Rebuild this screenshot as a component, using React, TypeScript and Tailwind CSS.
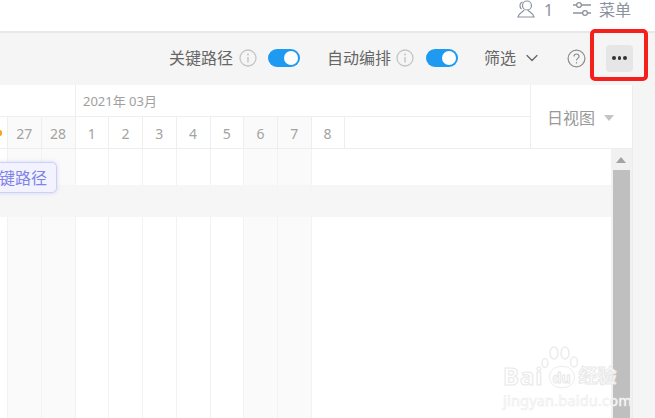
import { ChevronDown } from "lucide-react";

const font = { fontFamily: '"Noto Sans", "Noto Sans CJK SC", sans-serif' };

const days = [
  { label: "27", off: true },
  { label: "28", off: true },
  { label: "1" },
  { label: "2" },
  { label: "3" },
  { label: "4" },
  { label: "5" },
  { label: "6", off: true },
  { label: "7", off: true },
  { label: "8" },
];

function Info() {
  return (
    <svg width="18" height="18" viewBox="0 0 18 18" fill="none" className="shrink-0">
      <circle cx="9" cy="9" r="8" stroke="#c4c4c4" strokeWidth="1.3" />
      <circle cx="9" cy="5.4" r="1" fill="#c4c4c4" />
      <path d="M9 8v5.4" stroke="#c4c4c4" strokeWidth="1.4" />
    </svg>
  );
}

function Toggle() {
  return (
    <div className="flex h-[18px] w-[32px] items-center justify-end rounded-full bg-[#1e9af0] pr-[2px]">
      <div className="h-[14px] w-[14px] rounded-full bg-white" />
    </div>
  );
}

function Watermark() {
  return (
    <div className="absolute left-[503px] top-[364px] w-[130px] text-white">
      <div className="flex items-end font-bold [-webkit-text-stroke:1px_#e8e8e8]">
        <span className="text-[24px] leading-[24px] tracking-[1px]">Bai</span>
        <span className="ml-[5px] flex h-[22px] w-[26px] items-center justify-center rounded-full border border-[#ececec] text-[14px] [-webkit-text-stroke:1px_#e8e8e8]">
          du
        </span>
        <span className="ml-[4px] text-[19px] leading-[24px]">经验</span>
      </div>
      <svg width="38" height="24" viewBox="0 0 38 24" fill="none" stroke="#ececec" strokeWidth="1.5" className="absolute left-[38px] top-[-18px]">
        <ellipse cx="4" cy="17" rx="3" ry="4.5" />
        <ellipse cx="13" cy="7" rx="4" ry="6" />
        <ellipse cx="24" cy="7" rx="4" ry="6" />
        <ellipse cx="33" cy="16" rx="3.5" ry="5" />
      </svg>
      <div className="mt-[2px] text-[14.5px] leading-[20px] tracking-[0.2px] [-webkit-text-stroke:0.6px_#ececec]">
        jingyan.baidu.com
      </div>
    </div>
  );
}

export default function App() {
  return (
    <div className="relative h-[418px] w-[655px] overflow-hidden bg-[#f5f5f5]" style={font}>
      <header className="flex h-[33px] items-center justify-end border-b-2 border-[#e8e8e8] bg-white pb-[11px] pr-[24px] text-[16px] text-[#8b929e]">
        <svg width="20" height="20" viewBox="0 0 20 20" fill="none" stroke="#8b929e" strokeWidth="1.2" className="mb-[3px]">
          <circle cx="11" cy="6.5" r="4.5" />
          <path d="M8 11c-.5 2-5 2.5-6 7h16c-1-4.5-5.5-5-6-7" />
          <path d="M6.5 3.2C4.5 3.6 3.6 5.5 4.2 8c.2.8.8 1.6 1.3 2" />
        </svg>
        <span className="ml-[8px] w-[18px]">1</span>
        <svg width="20" height="16" viewBox="0 0 20 16" fill="none" stroke="#8b929e" strokeWidth="1.3" className="mb-[2px] ml-[10px]">
          <circle cx="7" cy="4" r="2.4" />
          <path d="M1 4h3.5M9.5 4H19" />
          <circle cx="13" cy="12" r="2.4" />
          <path d="M1 12h9.5M15.5 12H19" />
        </svg>
        <span className="ml-[7px]">菜单</span>
      </header>

      <div className="flex h-[52px] items-center pb-[2px] pl-[169px] text-[16px] text-[#666]">
        <span className="w-[64px]">关键路径</span>
        <span className="ml-[6px]"><Info /></span>
        <span className="ml-[11px]"><Toggle /></span>
        <span className="ml-[27px] w-[64px]">自动编排</span>
        <span className="ml-[5px]"><Info /></span>
        <span className="ml-[12px]"><Toggle /></span>
        <span className="ml-[26px] w-[32px]">筛选</span>
        <ChevronDown size={20} strokeWidth={1.5} className="ml-[6px]" />
        <span className="ml-[25px]">
          <svg width="19" height="19" viewBox="0 0 19 19" fill="none" stroke="#8c8c8c" strokeWidth="1.2">
            <circle cx="9.5" cy="9.5" r="8.4" />
            <path d="M7 7.4c0-3.2 5-3.2 5 0 0 2-2.5 2-2.5 4" />
            <path d="M9.5 13.2v1.3" />
          </svg>
        </span>
        <button className="ml-[20px] flex h-[27px] w-[27px] items-center justify-center gap-[2px] rounded-[4px] bg-[#e6e6e6]">
          <i className="h-[3.5px] w-[3.5px] rounded-full bg-[#333]" />
          <i className="h-[3.5px] w-[3.5px] rounded-full bg-[#333]" />
          <i className="h-[3.5px] w-[3.5px] rounded-full bg-[#333]" />
        </button>
      </div>

      <main className="flex h-[333px] w-[633px] flex-col border-r border-[#ececec] bg-white">
        <div className="flex h-[64px] border-b-[1px] border-[#eeeeee]">
          <div className="flex w-[530px] flex-col">
            <div className="ml-[75px] h-[31px] border-l border-[#eeeeee] pl-[7px] pt-[7px] text-[13px] leading-[18px] text-[#a0a0a0]">
              2021年 03月
            </div>
            <div className="flex h-[32px] border-t border-[#eeeeee] text-[14px] leading-[33px] text-[#a3a3a3]">
              <div className="flex w-[7px] items-center overflow-hidden">
                <i className="ml-[-2px] h-[6px] w-[4px] rounded-full bg-[#f5a623]" />
              </div>
              {days.map((d) => (
                <div
                  key={d.label}
                  className={`w-[33.75px] border-l border-[#eeeeee] text-center last:border-r ${d.off ? "bg-[#fafafa]" : ""}`}
                >
                  {d.label}
                </div>
              ))}
            </div>
          </div>
          <div className="flex flex-1 items-center border-l border-[#eeeeee] pt-[2px] pl-[16px] text-[16px] text-[#999]">
            <span>日视图</span>
            <span className="ml-[9px] h-0 w-0 border-x-[5.5px] border-t-[6px] border-x-transparent border-t-[#c4c4c4]" />
          </div>
        </div>

        <div className="flex min-h-0 flex-1">
          <div className="relative flex-1 overflow-hidden">
            <div className="flex h-full pl-[7px]">
              {days.map((d) => (
                <div
                  key={d.label}
                  className={`h-full w-[33.75px] border-l border-[#f2f2f2] ${d.off ? "bg-[#fafafa]" : ""}`}
                />
              ))}
            </div>
            <div className="absolute inset-x-0 top-[36px] h-[32px] bg-[#f5f5f5]/90" />
            <div className="absolute left-[-30px] top-[13px] flex h-[31px] items-center rounded-[5px] border border-[#ccd0fa] bg-[#f3f3ff] pl-[12px] pr-[9px] text-[16px] text-[#7f83e6] shadow-[0_0_4px_rgba(130,135,240,0.3)]">
              关键路径
            </div>
          </div>
          <div className="flex w-[21px] flex-col items-center bg-[#f1f1f1] pr-[1px]">
            <span className="mt-[8px] h-0 w-0 border-x-[5px] border-b-[6px] border-x-transparent border-b-[#a3a3a3]" />
            <div className="mt-[7px] w-[17px] flex-1 bg-[#bfbfbf]" />
          </div>
        </div>
      </main>

      <Watermark />

      <div className="absolute left-[590px] top-[29px] h-[52px] w-[58px] rounded-[5px] border-[4px] border-[#f5201c]" />
    </div>
  );
}
